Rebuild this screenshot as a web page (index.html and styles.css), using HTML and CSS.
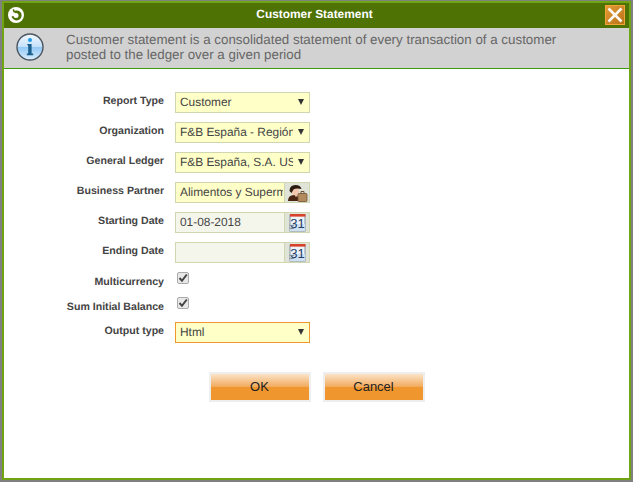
FILE: index.html
```html
<!DOCTYPE html>
<html lang="en">
<head>
<meta charset="utf-8">
<title>Customer Statement</title>
<link rel="stylesheet" href="styles.css">
</head>
<body>
<div class="dialog">
  <header class="titlebar">
    <svg class="logo" width="16" height="16" viewBox="0 0 16 16"><circle cx="8" cy="8" r="8" fill="#fff"/><circle cx="8.6" cy="8.4" r="5" fill="#4e7204"/><circle cx="8" cy="8.4" r="2.5" fill="#fff"/><path d="M8 8.4 L2.5 9.5 L3 5 L5.6 3.4z" fill="#fff"/><path d="M5.4 2.4 L6.2 5.2" stroke="#4e7204" stroke-width="1.6"/></svg>
    <h1 class="title">Customer Statement</h1>
    <button class="close" aria-label="Close"><svg width="18" height="18" viewBox="0 0 18 18"><path d="M2.5 2.5 L15.5 15.5 M15.5 2.5 L2.5 15.5" stroke="#fff" stroke-width="2.6" opacity=".95"/></svg></button>
  </header>
  <div class="info">
    <svg class="info-icon" width="28" height="28" viewBox="0 0 28 28">
      <defs><linearGradient id="g" x1="0" y1="0" x2="0" y2="1"><stop offset="0" stop-color="#f4f9ff"/><stop offset=".5" stop-color="#c4e0fa"/><stop offset=".52" stop-color="#93c8f5"/><stop offset="1" stop-color="#dcefff"/></linearGradient></defs>
      <circle cx="14" cy="14" r="13" fill="url(#g)" stroke="#4c5660" stroke-width="1.4"/>
      <circle cx="14" cy="7" r="2" fill="#1e9be8"/>
      <path d="M11 11 h4.6 v9.4 h1.6 v1.8 h-6.4 v-1.8 h1.4 v-7.6 h-.2z" fill="#1a5f8e"/>
    </svg>
    <p class="info-text">Customer statement is a consolidated statement of every transaction of a customer<br>posted to the ledger over a given period</p>
  </div>
  <main class="content">
    <form class="form">
      <label class="label">Report Type</label>
      <div class="field sel"><span class="val">Customer</span><i class="arrow"></i></div>
      <label class="label">Organization</label>
      <div class="field sel"><span class="val">F&amp;B España - Región Norte</span><i class="arrow"></i></div>
      <label class="label">General Ledger</label>
      <div class="field sel"><span class="val">F&amp;B España, S.A. US/A/Euro</span><i class="arrow"></i></div>
      <label class="label">Business Partner</label>
      <div class="field"><span class="val">Alimentos y Supermercados, S.A</span>
        <span class="btn-icon"><svg width="21" height="18" viewBox="0 0 21 18"><path d="M1 17 q0-6 6-6 q4 0 5 3 v3z" fill="#4a2412"/><circle cx="8" cy="7" r="4.2" fill="#f2c7b0"/><path d="M2.5 7 q0-6 6-6 q5 0 6 4 q-6-1-8 .6 l-2 3.4z" fill="#2a1a12"/><path d="M8 10.5 h3v2h-3z" fill="#e9b9a2"/><rect x="11" y="9.5" width="9" height="8" rx="1" fill="#b28a5e" stroke="#6e5030" stroke-width=".8"/><path d="M14 9.5 v-2 h3 v2" fill="none" stroke="#6e5030"/></svg></span></div>
      <label class="label">Starting Date</label>
      <div class="field date"><span class="val">01-08-2018</span>
        <span class="btn-icon"><svg width="17" height="18" viewBox="0 0 17 18"><rect x="1" y="1" width="15" height="16" fill="#eef3f9" stroke="#6a7f96" stroke-width=".8"/><rect x="1" y="0" width="15.5" height="2.6" fill="#d8412a"/><path d="M1 10 h15 v7 h-15z" fill="#cfe0f2"/><text x="8.5" y="14" class="cal">31</text><path d="M0.5 11 q3 1.4 4.5 0 M0.5 14 q3 1.4 4.5 0" stroke="#6f7f8f" fill="none"/></svg></span></div>
      <label class="label">Ending Date</label>
      <div class="field date"><span class="val"></span>
        <span class="btn-icon"><svg width="17" height="18" viewBox="0 0 17 18"><rect x="1" y="1" width="15" height="16" fill="#eef3f9" stroke="#6a7f96" stroke-width=".8"/><rect x="1" y="0" width="15.5" height="2.6" fill="#d8412a"/><path d="M1 10 h15 v7 h-15z" fill="#cfe0f2"/><text x="8.5" y="14" class="cal">31</text><path d="M0.5 11 q3 1.4 4.5 0 M0.5 14 q3 1.4 4.5 0" stroke="#6f7f8f" fill="none"/></svg></span></div>
      <label class="label label-check">Multicurrency</label>
      <div class="check-row"><span class="check"><svg width="10" height="10" viewBox="0 0 10 10"><path d="M1.5 5 L4 7.8 L8.8 1.5" fill="none" stroke="#444" stroke-width="2"/></svg></span></div>
      <label class="label label-check">Sum Initial Balance</label>
      <div class="check-row"><span class="check"><svg width="10" height="10" viewBox="0 0 10 10"><path d="M1.5 5 L4 7.8 L8.8 1.5" fill="none" stroke="#444" stroke-width="2"/></svg></span></div>
      <label class="label">Output type</label>
      <div class="field sel focus"><span class="val">Html</span><i class="arrow"></i></div>
    </form>
    <div class="actions">
      <button class="action" type="button">OK</button>
      <button class="action" type="button">Cancel</button>
    </div>
  </main>
</div>
</body>
</html>
```
FILE: styles.css
```css
* { box-sizing: border-box; }
html, body { margin: 0; height: 100%; }
body { background: #808080; font-family: "Liberation Sans", Arial, sans-serif; text-rendering: geometricPrecision; padding: 1px 0 0 2px; overflow: hidden; }
.dialog { width: 629px; height: 479px; border: 2px solid #70a414; background: #fff; display: flex; flex-direction: column; }
.titlebar { height: 25px; flex: none; background: #4e7204; display: flex; align-items: center; justify-content: center; padding: 0 4px 3px 0; position: relative; }
.logo { position: absolute; left: 4px; top: 4px; }
.title { margin: 0; font-size: 11.9px; font-weight: bold; color: #fff; }
.close { position: absolute; right: 4px; top: 2px; width: 20px; height: 20px; padding: 0; border: 1px solid #f3a338; background: linear-gradient(135deg, #e39a33, #b9741a); display: flex; align-items: center; justify-content: center; }
.info { height: 41px; flex: none; background: #d2d2d2; border-bottom: 1px solid #3f9a12; display: flex; align-items: center; padding: 0 0 2px 12px; }
.info-icon { flex: none; margin-right: 22px; }
.info-text { margin: 0; font-size: 13.35px; line-height: 15px; color: #666; }
.content { flex: 1; }
.form { display: grid; grid-template-columns: 160px 135px; grid-template-rows: repeat(6, 21px) 16px 16px 21px; column-gap: 11px; row-gap: 9px; align-items: center; margin-top: 23px; }
.label { font-size: 10.6px; font-weight: bold; color: #444; text-align: right; padding-bottom: 3px; }
.label-check { padding: 4px 0 0; align-self: start; }
.field { height: 21px; border: 1px solid #cfd6b0; background: #ffffc8; display: flex; align-items: center; font-size: 11.9px; color: #444; position: relative; }
.val { padding: 0 0 1px 4px; margin-right: 1px; white-space: nowrap; overflow: hidden; flex: 1; min-width: 0; }
.sel .val { margin-right: 16px; }
.arrow { position: absolute; right: 5px; top: 6px; width: 0; height: 0; border-left: 3px solid transparent; border-right: 3px solid transparent; border-top: 6px solid #333; }
.date { background: #f4f6ec; }
.btn-icon { width: 25px; align-self: stretch; flex: none; background: #dfe3d8; border-left: 1px solid #cfd6b0; display: flex; align-items: center; justify-content: center; }
.cal { font-family: "Liberation Sans", sans-serif; font-size: 13px; fill: #24406a; text-anchor: middle; }
.focus { border-color: #f0962e; }
.check-row { height: 16px; display: flex; align-items: flex-start; align-self: start; }
.check { width: 12px; height: 12px; margin-left: 2px; border: 1px solid #aaa; border-radius: 2px; background: #e8e8e8; display: flex; align-items: center; justify-content: center; }
.actions { display: flex; justify-content: flex-start; gap: 12px; margin: 29px 0 0 205px; }
.action { width: 102px; height: 30px; padding: 0 1px 2px 0; border: 2px solid #eee; font: 13px "Liberation Sans", sans-serif; color: #222; background: linear-gradient(#fbe3c8, #f2a95a 50%, #f0962e 51%); }
```
